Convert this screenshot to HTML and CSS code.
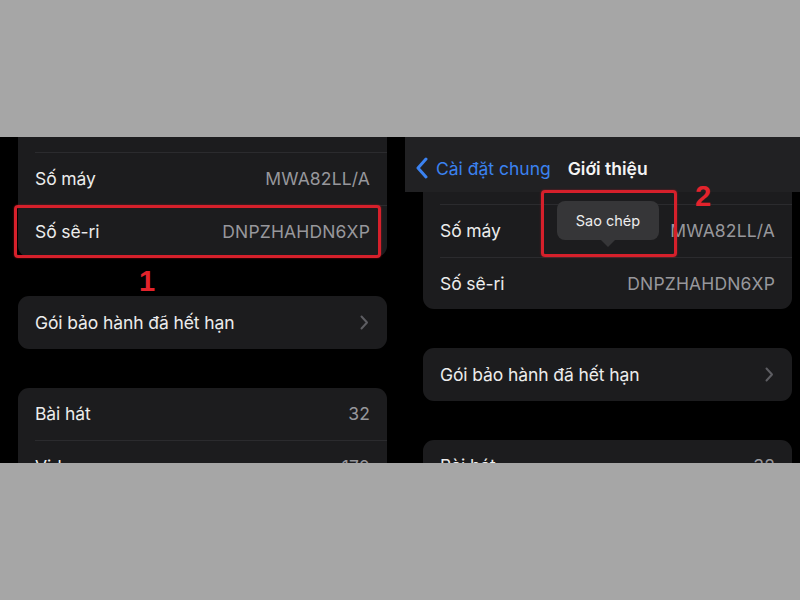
FILE: index.html
```html
<!DOCTYPE html>
<html lang="vi">
<head>
<meta charset="utf-8">
<title>Số sê-ri</title>
<link rel="stylesheet" href="styles.css">
</head>
<body>
<div class="top-band"></div>
<div class="shots">
  <section class="panel panel-left">
    <div class="col">
      <div class="card card-first-left">
        <div class="row"></div>
        <div class="row"><span class="label">Số máy</span><span class="value">MWA82LL/A</span></div>
        <div class="row"><span class="label">Số sê-ri</span><span class="value">DNPZHAHDN6XP</span></div>
      </div>
      <div class="card">
        <div class="row"><span class="label">Gói bảo hành đã hết hạn</span><span class="chev">
          <svg width="9" height="15" viewBox="0 0 9 15"><path d="M1.5 1.5 L7 7.5 L1.5 13.5" fill="none" stroke="#5d5d62" stroke-width="2" stroke-linecap="round" stroke-linejoin="round"/></svg>
        </span></div>
      </div>
      <div class="card">
        <div class="row"><span class="label">Bài hát</span><span class="value">32</span></div>
        <div class="row"><span class="label">Video</span><span class="value">170</span></div>
      </div>
    </div>
    <div class="mark mark-1"></div>
    <div class="num num-1">1</div>
  </section>
  <section class="panel panel-right">
    <div class="col">
      <div class="card card-first-right">
        <div class="row"></div>
        <div class="row"><span class="label">Số máy</span><span class="value">MWA82LL/A</span></div>
        <div class="row"><span class="label">Số sê-ri</span><span class="value">DNPZHAHDN6XP</span></div>
      </div>
      <div class="card">
        <div class="row"><span class="label">Gói bảo hành đã hết hạn</span><span class="chev">
          <svg width="9" height="15" viewBox="0 0 9 15"><path d="M1.5 1.5 L7 7.5 L1.5 13.5" fill="none" stroke="#5d5d62" stroke-width="2" stroke-linecap="round" stroke-linejoin="round"/></svg>
        </span></div>
      </div>
      <div class="card">
        <div class="row"><span class="label">Bài hát</span><span class="value">32</span></div>
        <div class="row"><span class="label">Video</span><span class="value">170</span></div>
      </div>
    </div>
    <header class="nav">
      <span class="back">
        <svg width="12" height="22" viewBox="0 0 12 22"><path d="M10 2 L2 11 L10 20" fill="none" stroke="#3b82f0" stroke-width="3" stroke-linecap="round" stroke-linejoin="round"/></svg>
        <span class="back-text">Cài đặt chung</span>
      </span>
      <span class="title">Giới thiệu</span>
    </header>
    <div class="tooltip">Sao chép</div>
    <div class="mark mark-2"></div>
    <div class="num num-2">2</div>
  </section>
</div>
<div class="bottom-band"></div>
</body>
</html>
```

FILE: styles.css
```css
html, body {
  margin: 0;
  padding: 0;
  background: #a6a6a6;
  font-family: "Inter", "Roboto", sans-serif;
}
.top-band { height: 137px; }
.bottom-band { height: 137px; }
.shots {
  display: flex;
  height: 326px;
  background: #000;
  overflow: hidden;
}
.panel {
  position: relative;
  overflow: hidden;
}
.panel-left { width: 405px; }
.panel-right { width: 395px; }
.col {
  display: flex;
  flex-direction: column;
  gap: 39px;
  padding-left: 18px;
}
.card {
  width: 369px;
  background: #1c1c1e;
  border-radius: 11px;
  padding-left: 17px;
  box-sizing: border-box;
}
.card-first-left { margin-top: -37.5px; }
.card-first-right { margin-top: 14.5px; }
.row {
  height: 52.5px;
  display: flex;
  align-items: center;
  justify-content: space-between;
  padding-right: 17px;
  box-sizing: border-box;
}
.row + .row { border-top: 1px solid #2b2b2e; }
.label {
  color: #ececec;
  font-size: 17.5px;
  letter-spacing: -0.1px;
}
.value {
  color: #97979c;
  font-size: 17.5px;
  letter-spacing: 0.15px;
}
.chev { display: flex; align-items: center; padding-right: 1px; }
.nav {
  position: absolute;
  left: 0;
  top: 0;
  width: 100%;
  height: 55px;
  background: #212123;
  display: flex;
  align-items: center;
  padding-left: 11px;
  padding-top: 7px;
  box-sizing: border-box;
  gap: 17px;
}
.back { display: flex; align-items: center; gap: 8px; }
.back-text { color: #3b82f0; font-size: 17.5px; }
.title { color: #f4f4f4; font-size: 17.5px; font-weight: 600; }
.mark {
  position: absolute;
  border: 3px solid #d6202b;
  border-radius: 4px;
  box-shadow: 0 0 2px rgba(230, 30, 40, 0.6);
  box-sizing: border-box;
}
.mark-1 { left: 14px; top: 68px; width: 367px; height: 53px; }
.mark-2 { left: 136px; top: 53px; width: 136px; height: 67px; }
.num {
  position: absolute;
  color: #e3232c;
  font-family: "Liberation Sans", Arial, sans-serif;
  font-weight: 700;
  font-size: 29px;
  line-height: 1;
}
.num-1 { left: 139px; top: 130px; }
.num-2 { left: 290px; top: 45px; }
.tooltip {
  position: absolute;
  left: 152px;
  top: 64px;
  width: 102px;
  height: 39px;
  background: #363638;
  border-radius: 8px;
  color: #ededed;
  font-size: 14.5px;
  display: flex;
  align-items: center;
  justify-content: center;
}
.tooltip::after {
  content: "";
  position: absolute;
  left: 44px;
  bottom: -7px;
  border-left: 7px solid transparent;
  border-right: 7px solid transparent;
  border-top: 7px solid #363638;
}
```
